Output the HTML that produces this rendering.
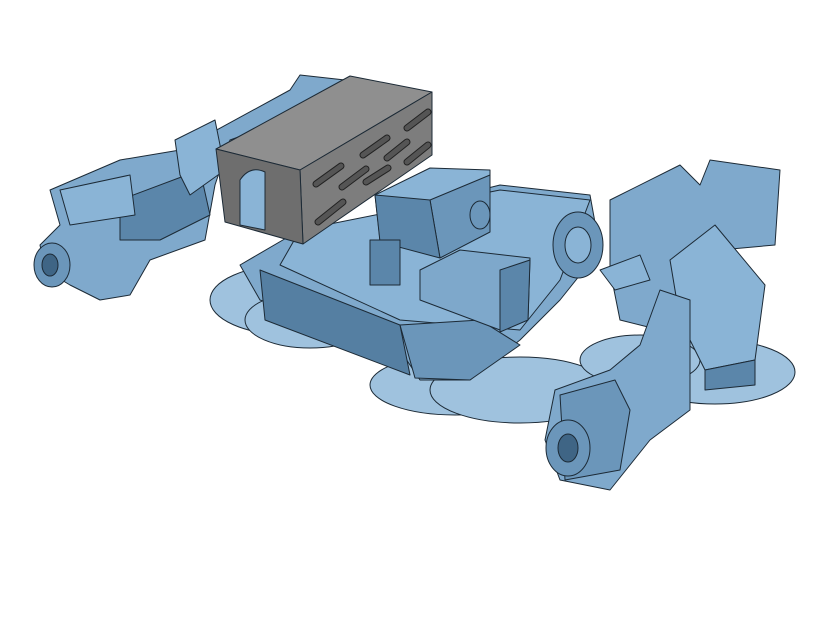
<!DOCTYPE html>
<html><head><style>html,body{margin:0;padding:0;background:#fff;width:820px;height:640px;overflow:hidden}</style></head>
<body>
<svg width="820" height="640" viewBox="0 0 820 640" xmlns="http://www.w3.org/2000/svg" stroke="#1c2a36" stroke-width="1" stroke-linejoin="round">
<g fill="#9fc2de">
<ellipse cx="290" cy="300" rx="80" ry="35"/>
<ellipse cx="310" cy="320" rx="65" ry="28"/>
<ellipse cx="455" cy="385" rx="85" ry="30"/>
<ellipse cx="520" cy="390" rx="90" ry="33"/>
<ellipse cx="715" cy="372" rx="80" ry="32"/>
<ellipse cx="640" cy="360" rx="60" ry="25"/>
</g>
<polygon points="240,265 300,230 380,215 500,185 590,195 600,250 560,300 520,340 470,380 420,380 400,350 260,300" fill="#7fa9cc"/>
<polygon points="300,230 500,190 590,200 560,280 520,330 400,320 280,265" fill="#8ab4d6"/>
<polygon points="260,270 400,325 410,375 265,320" fill="#557fa2"/>
<polygon points="400,325 480,320 520,345 470,380 415,378" fill="#6b96ba"/>
<polygon points="375,195 430,168 490,170 490,230 440,255 380,240" fill="#8ab4d6"/>
<polygon points="430,200 490,175 490,232 440,258" fill="#6b96ba"/>
<polygon points="375,195 430,200 440,258 380,242" fill="#5b86aa"/>
<ellipse cx="480" cy="215" rx="10" ry="14" fill="#6b96ba"/>
<polygon points="420,270 460,250 530,258 528,320 500,330 420,300" fill="#7ea8cb"/>
<polygon points="500,270 530,260 528,320 500,332" fill="#5b86aa"/>
<rect x="370" y="240" width="30" height="45" fill="#5b86aa"/>
<ellipse cx="578" cy="245" rx="25" ry="33" fill="#6b96ba"/>
<ellipse cx="578" cy="245" rx="13" ry="18" fill="#8ab4d6"/>
<polygon points="50,190 120,160 180,150 290,90 300,75 345,80 300,115 230,140 215,185 205,240 150,260 130,295 100,300 70,285 45,270 40,245 60,225" fill="#7fa9cc"/>
<polygon points="120,200 200,170 210,215 160,240 120,240" fill="#5b86aa"/>
<ellipse cx="52" cy="265" rx="18" ry="22" fill="#6b96ba"/>
<ellipse cx="50" cy="265" rx="8" ry="11" fill="#3f6585"/>
<polygon points="60,190 130,175 135,215 70,225" fill="#8ab4d6"/>
<polygon points="175,140 215,120 225,170 190,195 180,175" fill="#8ab4d6"/>
<polygon points="216,149 350,76 432,92 300,170" fill="#8f8f8f"/>
<polygon points="300,170 432,92 432,155 303,244" fill="#7d7d7d"/>
<polygon points="216,149 300,170 303,244 225,222" fill="#6e6e6e"/>
<path d="M240,225 L240,180 Q250,165 265,172 L265,230 Z" fill="#8ab4d6"/>
<g stroke="#222" stroke-width="7" stroke-linecap="round">
<line x1="316" y1="184" x2="341" y2="166"/>
<line x1="342" y1="187" x2="366" y2="169"/>
<line x1="366" y1="182" x2="388" y2="168"/>
<line x1="318" y1="222" x2="343" y2="202"/>
<line x1="363" y1="155" x2="387" y2="138"/>
<line x1="387" y1="158" x2="407" y2="142"/>
<line x1="407" y1="162" x2="428" y2="145"/>
<line x1="407" y1="128" x2="428" y2="112"/>
</g>
<g stroke="#555" stroke-width="5" stroke-linecap="round">
<line x1="316" y1="184" x2="341" y2="166"/>
<line x1="342" y1="187" x2="366" y2="169"/>
<line x1="366" y1="182" x2="388" y2="168"/>
<line x1="318" y1="222" x2="343" y2="202"/>
<line x1="363" y1="155" x2="387" y2="138"/>
<line x1="387" y1="158" x2="407" y2="142"/>
<line x1="407" y1="162" x2="428" y2="145"/>
<line x1="407" y1="128" x2="428" y2="112"/>
</g>
<polygon points="610,200 680,165 700,185 710,160 780,170 775,245 720,250 700,300 660,330 620,320 610,270" fill="#7fa9cc"/>
<polygon points="670,260 715,225 765,285 755,360 705,370 680,320" fill="#8ab4d6"/>
<polygon points="705,370 755,360 755,385 705,390" fill="#5b86aa"/>
<polygon points="555,390 610,370 640,345 660,290 690,300 690,410 650,440 610,490 560,480 545,440" fill="#7fa9cc"/>
<polygon points="560,395 615,380 630,410 620,470 565,480" fill="#6b96ba"/>
<ellipse cx="568" cy="448" rx="22" ry="28" fill="#6b96ba"/>
<ellipse cx="568" cy="448" rx="10" ry="14" fill="#3f6585"/>
<polygon points="600,270 640,255 650,280 615,290" fill="#8ab4d6"/>
</svg>
</body></html>
